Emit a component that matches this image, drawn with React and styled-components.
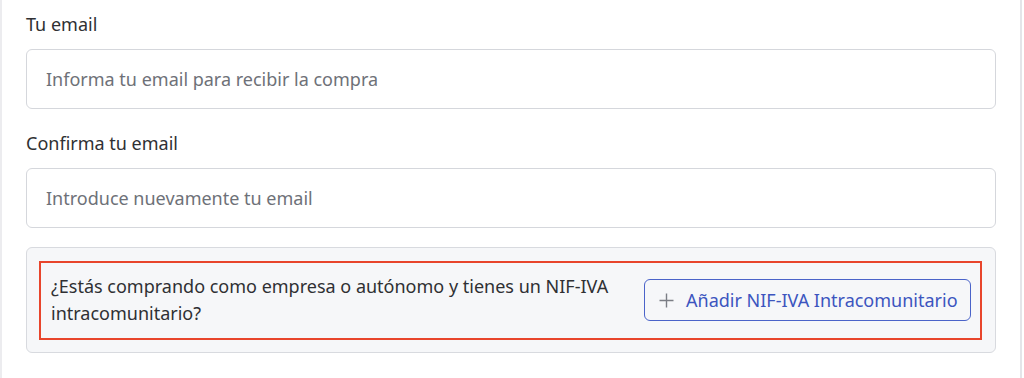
import React from 'react';
import styled, { createGlobalStyle } from 'styled-components';

const GlobalStyle = createGlobalStyle`
  body {
    margin: 0;
    background: #ffffff;
    font-family: "Noto Sans", "Open Sans", sans-serif;
  }
`;

const Frame = styled.div`
  box-sizing: border-box;
  width: 1022px;
  height: 378px;
  border-left: 2px solid #ececef;
  border-right: 2px solid #e4e5e9;
  padding: 12px 24px 0 24px;
`;

const Form = styled.div`
  width: 970px;
  display: flex;
  flex-direction: column;
`;

const Field = styled.div`
  display: flex;
  flex-direction: column;
  gap: 13px;
  margin-bottom: ${p => p.last ? '19px' : '22px'};
`;

const Label = styled.label`
  font-size: 18px;
  line-height: 24px;
  color: #2f3033;
`;

const Input = styled.input`
  box-sizing: border-box;
  height: 60px;
  width: 100%;
  border: 1px solid #d5d7dc;
  border-radius: 6px;
  padding: 0 19px;
  font-family: inherit;
  font-size: 18px;
  color: #2f3033;
  outline: none;

  &::placeholder {
    color: #6e7178;
  }
`;

const Notice = styled.div`
  box-sizing: border-box;
  border: 1px solid #d8dadf;
  border-radius: 6px;
  background: #f6f7f9;
  padding: 13px 13px 12px 12px;
`;

const NoticeRow = styled.div`
  display: flex;
  align-items: center;
  justify-content: space-between;
  gap: 14px;
  border: 2px solid #e8452c;
  padding: 10px 9px 11px 10px;
`;

const NoticeText = styled.p`
  margin: 0;
  flex: 1;
  font-size: 18px;
  line-height: 27px;
  color: #2f3033;
`;

const AddButton = styled.button`
  box-sizing: border-box;
  flex: none;
  display: flex;
  align-items: center;
  gap: 12px;
  height: 42px;
  width: 327px;
  padding: 0 12px 0 14px;
  border: 1.5px solid #4a63c9;
  border-radius: 6px;
  background: transparent;
  font-family: inherit;
  font-size: 18px;
  white-space: nowrap;
  color: #3c55bf;
  cursor: pointer;
`;

const PlusIcon = () => (
  <svg width="15" height="15" viewBox="0 0 15 15" fill="none" stroke="#7b7e85" strokeWidth="1.4">
    <path d="M7.5 0.5v14M0.5 7.5h14" />
  </svg>
);

export default function App() {
  return (
    <>
      <GlobalStyle />
      <Frame>
        <Form>
          <Field>
            <Label>Tu email</Label>
            <Input placeholder="Informa tu email para recibir la compra" />
          </Field>
          <Field last>
            <Label>Confirma tu email</Label>
            <Input placeholder="Introduce nuevamente tu email" />
          </Field>
          <Notice>
            <NoticeRow>
              <NoticeText>
                ¿Estás comprando como empresa o autónomo y tienes un NIF-IVA intracomunitario?
              </NoticeText>
              <AddButton>
                <PlusIcon />
                <span>Añadir NIF-IVA Intracomunitario</span>
              </AddButton>
            </NoticeRow>
          </Notice>
        </Form>
      </Frame>
    </>
  );
}
